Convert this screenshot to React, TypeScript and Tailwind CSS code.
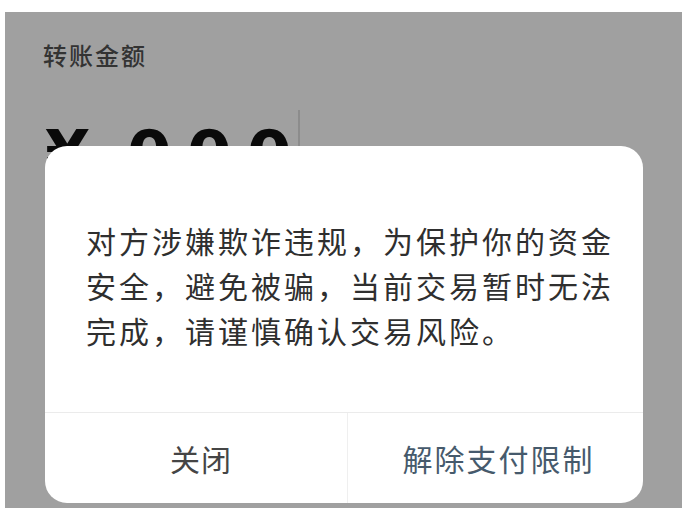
import React from "react";

const cjk = "font-['Noto_Sans_CJK_SC','Noto_Sans',sans-serif]";

export default function App() {
  return (
    <div className="w-[691px] h-[519px] bg-white pt-[12px] pl-[5px] pr-[9px] pb-[11px]">
      {/* Transfer page under the dialog */}
      <div className="relative h-full bg-[#a0a0a0] overflow-hidden">
        <div className={`pt-[27px] pl-[38px] text-[24px] leading-[32px] tracking-[2px] font-medium text-[#333] ${cjk}`}>
          转账金额
        </div>

        <div className="flex items-start pl-[40px] mt-[39px] font-['DejaVu_Sans',sans-serif] font-bold text-[64px] leading-[64px] text-[#0a0a0a]">
          <span className="mt-[12px] w-[40px]">¥</span>
          <div className="flex gap-[20px] ml-[42px] mt-[12px]">
            <span className="w-[40px] text-center">0</span>
            <span className="w-[40px] text-center">0</span>
            <span className="w-[40px] text-center">0</span>
          </div>
          <span className="ml-[11px] w-[2px] h-[60px] bg-[#8c8c8c]" />
        </div>

        {/* Dialog */}
        <div className={`absolute left-[40px] top-[134px] w-[598px] h-[357px] bg-white rounded-[22px] flex flex-col ${cjk}`}>
          <p className="flex-1 pt-[72px] pl-[41px] text-[30px] leading-[45px] tracking-[3px] text-[#2f2f2f] whitespace-nowrap">
            对方涉嫌欺诈违规，为保护你的资金
            <br />
            安全，避免被骗，当前交易暂时无法
            <br />
            完成，请谨慎确认交易风险。
          </p>
          <div className="h-[91px] flex border-t border-[#ebebeb]">
            <button className="w-[303px] flex items-center justify-center pl-[10px] text-[30px] tracking-[1px] text-[#454545] border-r border-[#efefef]">
              关闭
            </button>
            <button className="flex-1 flex items-center justify-center pl-[6px] text-[30px] tracking-[2px] text-[#465a6c]">
              解除支付限制
            </button>
          </div>
        </div>
      </div>
    </div>
  );
}
